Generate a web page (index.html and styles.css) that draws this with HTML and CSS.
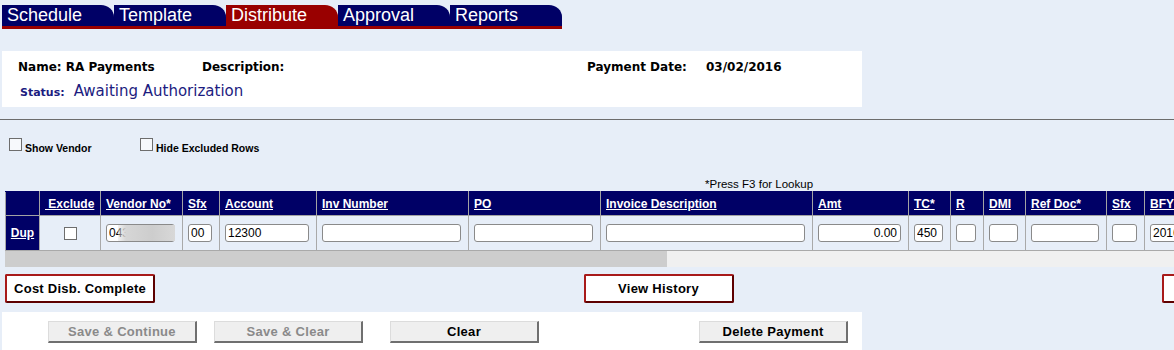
FILE: index.html
```html
<!DOCTYPE html>
<html>
<head>
<meta charset="utf-8">
<title>Distribute</title>
<link rel="stylesheet" href="styles.css">
</head>
<body>
<nav class="tabs">
  <a class="tab">Schedule</a>
  <a class="tab">Template</a>
  <a class="tab active">Distribute</a>
  <a class="tab">Approval</a>
  <a class="tab">Reports</a>
</nav>

<section class="info">
  <div class="info-row">
    <span class="f-name">Name: RA Payments</span>
    <span class="f-desc">Description:</span>
    <span class="f-plabel">Payment Date:</span>
    <span class="f-date">03/02/2016</span>
  </div>
  <div class="status-row">
    <span class="status-label">Status:</span>
    <span class="status-value">Awaiting Authorization</span>
  </div>
</section>

<hr class="rule">

<div class="main">
  <div class="options">
    <label class="opt opt-first"><input type="checkbox" class="chk"><span>Show Vendor</span></label>
    <label class="opt"><input type="checkbox" class="chk"><span>Hide Excluded Rows</span></label>
  </div>
  <div class="note">*Press F3 for Lookup</div>

  <div class="grid-wrap">
    <table class="grid">
      <colgroup>
        <col class="c34"><col class="c61"><col class="c82"><col class="c37"><col class="c97">
        <col class="c152"><col class="c132"><col class="c212"><col class="c96"><col class="c42">
        <col class="c33"><col class="c42"><col class="c81"><col class="c38"><col class="c60">
        <col class="crest">
      </colgroup>
      <thead>
        <tr>
          <th></th>
          <th><a>&nbsp;Exclude</a></th>
          <th><a>Vendor No*</a></th>
          <th><a>Sfx</a></th>
          <th><a>Account</a></th>
          <th><a>Inv Number</a></th>
          <th><a>PO</a></th>
          <th><a>Invoice Description</a></th>
          <th><a>Amt</a></th>
          <th><a>TC*</a></th>
          <th><a>R</a></th>
          <th><a>DMI</a></th>
          <th><a>Ref Doc*</a></th>
          <th><a>Sfx</a></th>
          <th><a>BFY</a></th>
          <th></th>
        </tr>
      </thead>
      <tbody>
        <tr>
          <td class="dup"><a>Dup</a></td>
          <td class="center"><input type="checkbox" class="chk chk-white"></td>
          <td><span class="redact-wrap"><input class="fld" type="text" value="043"><span class="redact"></span></span></td>
          <td><input class="fld" type="text" value="00"></td>
          <td><input class="fld" type="text" value="12300"></td>
          <td><input class="fld" type="text" value=""></td>
          <td><input class="fld" type="text" value=""></td>
          <td><input class="fld" type="text" value=""></td>
          <td><input class="fld num" type="text" value="0.00"></td>
          <td><input class="fld" type="text" value="450"></td>
          <td><input class="fld" type="text" value=""></td>
          <td><input class="fld" type="text" value=""></td>
          <td><input class="fld" type="text" value=""></td>
          <td><input class="fld" type="text" value=""></td>
          <td><input class="fld" type="text" value="2016"></td>
          <td></td>
        </tr>
      </tbody>
    </table>
  </div>
  <div class="hscroll"><div class="thumb"></div></div>

  <div class="actions">
    <button class="btn-red">Cost Disb. Complete</button>
    <button class="btn-red">View History</button>
    <button class="btn-red"></button>
  </div>
</div>

<div class="footer-bar">
  <div class="fcell fc1"><button class="btn-gray disabled">Save &amp; Continue</button></div>
  <div class="fcell fc2"><button class="btn-gray disabled">Save &amp; Clear</button></div>
  <div class="fcell fc3"><button class="btn-gray">Clear</button></div>
  <div class="fcell"><button class="btn-gray">Delete Payment</button></div>
</div>
</body>
</html>
```

FILE: styles.css
```css
* { box-sizing: border-box; }

html, body {
  margin: 0;
  padding: 0;
  overflow: hidden;
}

body {
  background: #e7eef8;
  font-family: "Liberation Sans", Arial, sans-serif;
  color: #000;
  width: 1174px;
  height: 350px;
}

/* ---------- tabs ---------- */
.tabs {
  display: flex;
  margin: 5px 0 0 2px;
  width: 560px;
  border-bottom: 3px solid #990000;
}

.tab {
  display: block;
  width: 112px;
  height: 21px;
  padding-left: 5px;
  background: #000066;
  color: #fff;
  font-size: 18px;
  line-height: 21px;
  border-top-right-radius: 13px 12px;
}

.tab.active { background: #990000; }

/* ---------- info box ---------- */
.info {
  margin: 22px 0 0 2px;
  width: 860px;
  height: 56px;
  background: #fff;
  padding: 9px 0 0 16px;
  font-family: "DejaVu Sans", Verdana, sans-serif;
}

.info-row {
  display: flex;
  font-size: 12px;
  font-weight: bold;
  line-height: 14px;
}

.f-name { width: 184px; }
.f-desc { width: 385px; }
.f-plabel { width: 119px; }

.status-row {
  display: flex;
  align-items: baseline;
  margin: 8px 0 0 2px;
  color: #1c1c80;
  line-height: 18px;
}

.status-label {
  font-size: 11px;
  font-weight: bold;
}

.status-value {
  font-size: 15px;
  margin-left: 9px;
}

.rule {
  margin: 12px 0 0 0;
  border: 0;
  border-top: 1px solid #6c6c6c;
  height: 0;
}

/* ---------- main ---------- */
.main {
  padding-left: 5px;
}

.options {
  display: flex;
  align-items: flex-end;
  margin-top: 15px;
  height: 19px;
}

.opt {
  display: flex;
  align-items: flex-end;
  font-size: 10.5px;
  font-weight: bold;
  line-height: 12px;
}

.opt-first { width: 131px; }

.chk {
  appearance: none;
  -webkit-appearance: none;
  width: 13px;
  height: 13px;
  margin: 3px 3px 3px 4px;
  border: 1px solid #6d6d6d;
  background: #f7f9fc;
  border-radius: 0;
}

.chk-white {
  background: #fff;
  margin: 0;
  vertical-align: middle;
}

.note {
  margin: 23px 0 0 700px;
  height: 14px;
  font-size: 11.5px;
  line-height: 14px;
}

/* ---------- grid ---------- */
.grid-wrap {
  width: 1307px;
  overflow: hidden;
}

.grid {
  width: 2575px;
  table-layout: fixed;
  border-collapse: collapse;
}

.c33 { width: 33px; }
.c34 { width: 34px; }
.c37 { width: 37px; }
.c38 { width: 38px; }
.c42 { width: 42px; }
.c60 { width: 60px; }
.c61 { width: 61px; }
.c81 { width: 81px; }
.c82 { width: 82px; }
.c96 { width: 96px; }
.c97 { width: 97px; }
.c132 { width: 132px; }
.c152 { width: 152px; }
.c212 { width: 212px; }
.crest { width: 1376px; }

.grid th {
  height: 24px;
  padding: 0 5px;
  background: #000066;
  border: 1px solid #a3a3a3;
  border-top-color: #000066;
  text-align: left;
  font-size: 12px;
  font-weight: bold;
  white-space: nowrap;
  overflow: hidden;
}

.grid th a, .dup a {
  color: #fff;
  text-decoration: underline;
}

.grid td {
  height: 35px;
  padding: 0 5px;
  border: 1px solid #a9a9a9;
  vertical-align: middle;
}

.grid td.dup {
  background: #000066;
  text-align: center;
  font-size: 12px;
  font-weight: bold;
  padding: 0;
}

.grid td.center { text-align: center; }

.fld {
  display: block;
  width: calc(100% - 2px);
  height: 18px;
  margin: 0;
  padding: 0 2px;
  border: 1px solid #8a8a8a;
  border-radius: 3px;
  background: #fff;
  font-family: "Liberation Sans", Arial, sans-serif;
  font-size: 12px;
  color: #000;
}

.fld.num {
  text-align: right;
  padding-right: 3px;
}

.redact-wrap {
  position: relative;
  display: block;
}

.redact {
  position: absolute;
  left: 12px;
  top: 1px;
  width: 57px;
  height: 16px;
  background: linear-gradient(90deg, rgba(220,220,220,0.35) 0, #d6d6d6 14%, #cdcdcd 60%, #d8d8d8 100%);
}

.hscroll {
  width: 1307px;
  height: 16px;
  background: #f0f0f0;
}

.thumb {
  width: 662px;
  height: 16px;
  background: #cdcdcd;
}

/* ---------- action buttons ---------- */
.actions {
  display: flex;
  justify-content: space-between;
  width: 1307px;
  margin-top: 7px;
}

.btn-red {
  width: 150px;
  height: 29px;
  margin: 0;
  padding: 0;
  background: #fff;
  border: 2px solid;
  border-color: #a81a1a #5e0000 #5e0000 #a81a1a;
  border-radius: 2px;
  font-family: "Liberation Sans", Arial, sans-serif;
  font-size: 13px;
  font-weight: bold;
  letter-spacing: 0.25px;
  color: #000;
}

/* ---------- footer ---------- */
.footer-bar {
  display: flex;
  margin: 9px 0 0 2px;
  width: 860px;
  height: 40px;
  background: #fff;
  padding: 9px 0 0 46px;
}

.fc1 { width: 166px; }
.fc2 { width: 176px; }
.fc3 { width: 309px; }

.btn-gray {
  width: 149px;
  height: 22px;
  margin: 0;
  padding: 0;
  background: #efefef;
  border: 1px solid #dcdcdc;
  border-right: 2px solid #6f6f6f;
  border-bottom: 2px solid #6f6f6f;
  font-family: "Liberation Sans", Arial, sans-serif;
  font-size: 13px;
  font-weight: bold;
  letter-spacing: 0.3px;
  color: #000;
}

.btn-gray.disabled { color: #8a8a8a; }
```
